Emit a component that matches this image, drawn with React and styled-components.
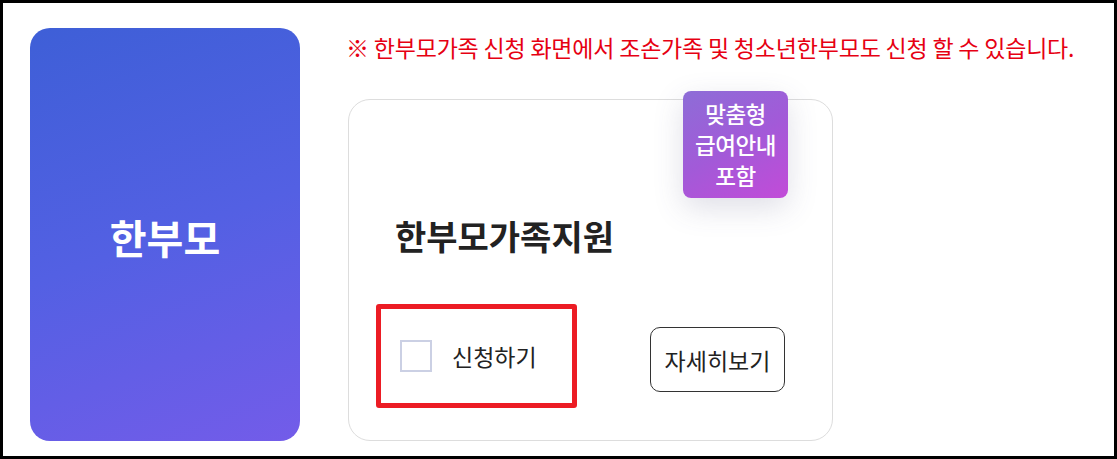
import React from "react";
import styled, { createGlobalStyle } from "styled-components";

const GlobalStyle = createGlobalStyle`
  * { box-sizing: border-box; }
  html, body {
    margin: 0;
    padding: 0;
    background: #fff;
    font-family: "Noto Sans CJK KR", "Noto Sans", sans-serif;
  }
`;

const Frame = styled.div`
  width: 1117px;
  height: 459px;
  border: 3px solid #000;
  padding: 25px 0 0 27px;
  display: flex;
  gap: 46px;
  overflow: hidden;
`;

const CategoryCard = styled.div`
  width: 270px;
  height: 413px;
  border-radius: 20px;
  background: linear-gradient(160deg, #3e5fd7 0%, #5360e3 50%, #735ce9 100%);
  display: flex;
  align-items: center;
  justify-content: center;
  color: #fff;
  font-size: 40px;
  font-weight: 700;
  padding-top: 4px;
`;

const Column = styled.div`
  display: flex;
  flex-direction: column;
`;

const Note = styled.p`
  margin: 3px 0 0;
  font-size: 23px;
  line-height: 32px;
  color: #e60012;
  letter-spacing: -0.2px;
  white-space: nowrap;
`;

const ServiceCard = styled.div`
  position: relative;
  margin: 36px 0 0 2px;
  width: 485px;
  height: 342px;
  border: 1px solid #dddddd;
  border-radius: 22px;
  display: flex;
  flex-direction: column;
`;

const Badge = styled.div`
  position: absolute;
  top: -9px;
  right: 44px;
  width: 105px;
  height: 107px;
  border-radius: 8px;
  background: linear-gradient(150deg, #8d6dd7 0%, #a25ad8 50%, #c24bd8 100%);
  box-shadow: 0 10px 30px rgba(80, 80, 120, 0.18);
  color: #fff;
  font-size: 22.5px;
  font-weight: 500;
  line-height: 31px;
  letter-spacing: -0.5px;
  text-align: center;
  display: flex;
  align-items: center;
  justify-content: center;
`;

const Title = styled.h2`
  margin: 116px 0 0 46px;
  font-size: 34px;
  font-weight: 700;
  line-height: 40px;
  color: #222;
`;

const ActionRow = styled.div`
  margin: 48px 0 0 27px;
  display: flex;
  align-items: center;
`;

const ApplyBox = styled.label`
  width: 201px;
  height: 104px;
  border: 5px solid #ec1c24;
  border-radius: 3px;
  padding-left: 19px;
  display: flex;
  align-items: center;
  gap: 20px;
  font-size: 23px;
  color: #222;
`;

const Check = styled.span`
  width: 32px;
  height: 32px;
  border: 2px solid #cbd0e4;
  background: #fff;
`;

const DetailButton = styled.button`
  margin: 7px 0 0 73px;
  width: 135px;
  height: 65px;
  border: 1px solid #333;
  border-radius: 10px;
  background: #fff;
  font-family: inherit;
  font-size: 23px;
  color: #222;
  padding: 0;
`;

export default function App() {
  return (
    <>
      <GlobalStyle />
      <Frame>
        <CategoryCard>한부모</CategoryCard>
        <Column>
          <Note>※ 한부모가족 신청 화면에서 조손가족 및 청소년한부모도 신청 할 수 있습니다.</Note>
          <ServiceCard>
            <Badge>
              맞춤형
              <br />
              급여안내
              <br />
              포함
            </Badge>
            <Title>한부모가족지원</Title>
            <ActionRow>
              <ApplyBox>
                <Check />
                신청하기
              </ApplyBox>
              <DetailButton>자세히보기</DetailButton>
            </ActionRow>
          </ServiceCard>
        </Column>
      </Frame>
    </>
  );
}
